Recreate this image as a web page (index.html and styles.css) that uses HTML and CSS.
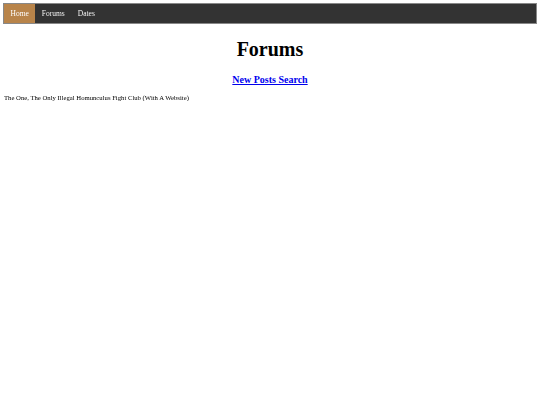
FILE: index.html
```html
<!DOCTYPE html>
<html>
<head>
<meta charset="utf-8">
<link rel="stylesheet" href="styles.css">
</head>
<body>
<nav class="topnav">
  <a class="nav-item active" href="#">Home</a>
  <a class="nav-item" href="#">Forums</a>
  <a class="nav-item" href="#">Dates</a>
</nav>
<h1 class="title">Forums</h1>
<div class="search"><a href="#">New Posts Search</a></div>
<p class="forum">The One, The Only Illegal Homunculus Fight Club (With A Website)</p>
</body>
</html>
```
FILE: styles.css
```css
html, body {
  background: #fff;
}
body {
  margin: 3px;
  font-family: "Liberation Serif", "Times New Roman", serif;
  color: #000;
}
.topnav {
  display: flex;
  background: #333;
  border: 1px solid #888;
  height: 19px;
  align-items: stretch;
  will-change: transform;
}
.nav-item {
  display: flex;
  align-items: center;
  padding: 0 6.5px;
  color: #f2f2f2;
  text-decoration: none;
  font-size: 7.5px;
}
.nav-item.active {
  background: #b8844a;
  color: #fff;
}
.title {
  text-align: center;
  font-size: 20px;
  margin: 14px 0 0;
  line-height: 23px;
}
.search {
  text-align: center;
  font-size: 10px;
  font-weight: bold;
  margin-top: 13px;
}
.search a {
  color: #0000ee;
}
.forum {
  font-size: 6.7px;
  margin: 9px 0 0 1px;
  will-change: transform;
}
```
